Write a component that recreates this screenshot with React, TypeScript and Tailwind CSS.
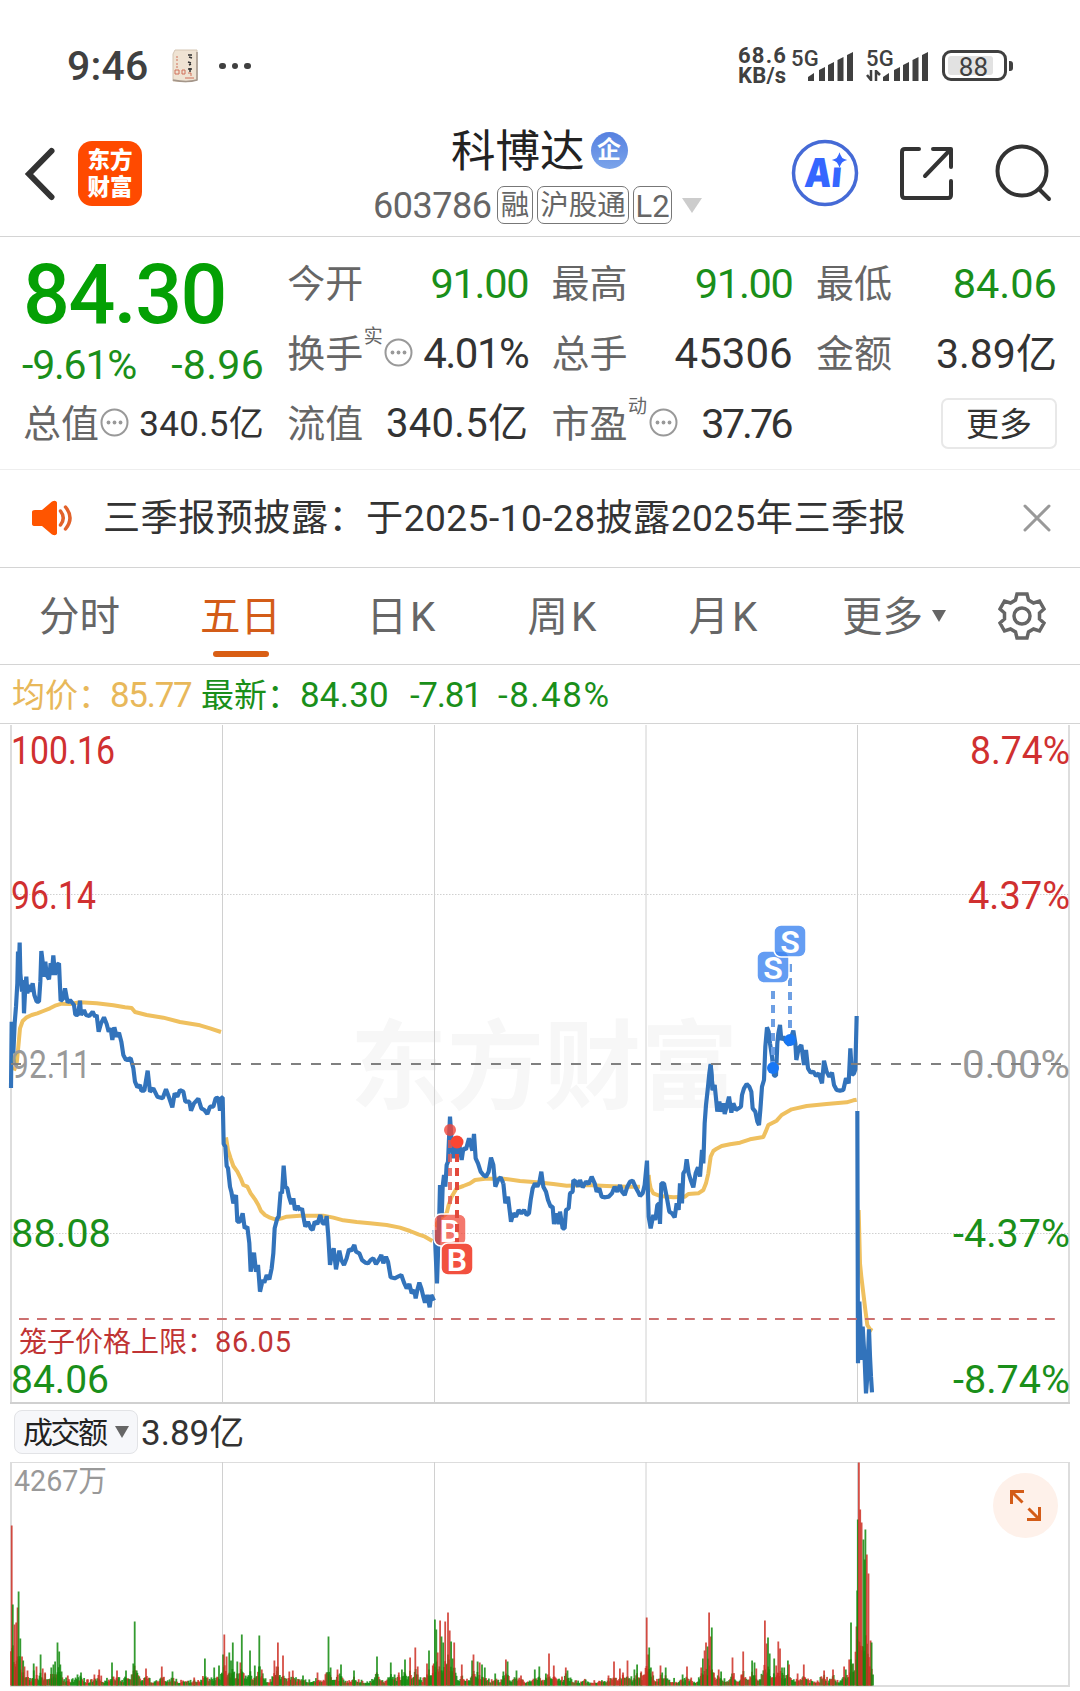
import { ReactNode } from 'react';

const DAY_LINES = [222.5, 434.5, 646, 857.5];

// Traced price runs, each in its own triple-density space anchored at x/y
interface Run {
  x: number;
  y: number;
  points: string;
}

const priceRuns: Run[] = [
  {
    x: 0,
    y: 920,
    points:
      '33,504 35,305 40,400 44,310 48,260 52,190 54,95 57,130 59,68 61,160 66,215 70,180 72,280 76,200 79,170 82,220 88,195 92,215 98,190 103,225 110,245 117,245 121,185 124,93 128,125 131,170 136,125 140,165 147,178 152,130 155,165 160,106 165,165 170,135 177,130 180,200 182,243 190,235 195,205 203,248 210,240 222,255 226,284 234,285 240,242 243,285 252,270 258,285 268,288 278,275 285,290 290,285 296,335 303,310 312,292 320,312 326,335 332,325 337,360 343,322 350,350 357,338 364,365 370,405 378,420 392,415 400,445 405,485 412,502 420,495 424,512 433,512 443,452 450,515 460,505 472,530 488,535 498,508 508,535 517,562 524,520 532,530 540,510 550,515 556,545 568,545 573,572 582,550 595,536 604,565 613,570 622,582 630,560 640,560 647,535 655,533 660,572 664,533 668,533 671,672 676,680 680,738 684,745 690,800 694,815 700,850 708,825 712,905 720,905 728,880 734,925 742,920 748,970 752,1055 762,998 768,1055 774,1035 780,1115 788,1080 793,1088 800,1065 808,1078 815,1045 820,1000 824,925 832,895 836,890 842,815 846,820 851,737 856,800 862,805 867,830 874,852 880,835 885,870 893,858 900,872',
  },
  {
    x: 210,
    y: 1080,
    points:
      '270,392 276,385 282,420 286,440 294,425 302,445 308,450 314,425 322,432 331,405 338,430 346,430 350,408 355,470 360,555 366,520 371,505 378,568 388,512 394,540 402,555 410,535 417,508 424,512 433,495 438,515 448,520 456,540 466,548 474,550 482,540 490,535 498,552 506,540 514,525 520,550 528,530 534,545 542,592 554,595 564,590 574,585 582,608 590,625 598,612 605,640 613,630 617,655 622,630 628,608 634,625 640,650 645,668 652,645 659,682 664,645 672,662',
  },
  {
    x: 210,
    y: 1080,
    points:
      '674,450 677,520 681,610 684,520 688,400 690,315 695,410 698,320 702,285 706,320 710,255 714,245 720,110 722,140 726,200 730,235 736,190 742,230 748,195 755,240 760,205 768,208 777,175 787,212 792,162 797,235 804,250 812,275 820,285 828,290 836,275 843,233 850,255 856,320 864,300 872,292 880,310',
  },
  {
    x: 420,
    y: 1050,
    points:
      '250,400 256,460 264,440 270,490 273,515 280,490 288,500 296,480 304,490 312,480 320,495 327,490 332,450 338,415 345,400 352,410 358,398 364,365 370,410 378,425 384,450 392,470 398,470 402,522 410,490 416,522 420,485 428,535 434,535 438,480 446,475 450,430 458,425 460,390 468,395 474,410 480,390 488,412 498,395 506,402 515,380 524,400 530,425 538,415 545,440 556,442 566,440 576,430 584,410 592,425 600,405 606,425 614,435 622,410 630,395 638,392 646,410 654,425 660,438 668,430 674,405 681,332 683,400 686,500 692,535 700,495 706,510 712,465 718,460 720,522 724,400 732,400 740,440 748,485 756,490 764,502 770,460 776,480 780,400 786,460 790,370 796,360 800,328 806,370 812,390 820,412 827,370 834,352 840,380 846,300 850,340 854,220 858,165 863,120 868,70 872,42 878,120 884,105',
  },
  {
    x: 680,
    y: 910,
    points:
      '92,465 98,540 104,525 112,605 118,575 124,605 130,580 134,612 140,590 147,560 154,608 160,580 168,600 176,595 183,590 186,555 192,535 200,522 208,530 214,545 218,595 226,605 232,635 237,645 241,600 246,530 252,510 256,410 261,352 266,365 270,400 276,440 282,497 288,497 292,400 295,370 300,345 304,390 310,380 318,395 328,405 334,380 340,362 346,400 349,450 356,415 364,405 372,465 378,420 384,475 392,488 400,485 408,498 416,490 426,520 432,452 440,485 448,500 456,488 462,525 470,540 480,542 490,540 498,505 506,520 511,415 516,495 522,490 526,478 530,318',
  },
  {
    x: 680,
    y: 910,
    points: '532,603 533,1000 534,1360 538,1175 541,1240 545,1350 548,1250 554,1350 558,1450 562,1400 567,1258 570,1340 573,1400 576,1447',
  },
];

const averageRuns: Run[] = [
  {
    x: 0,
    y: 920,
    points:
      '42,452 50,430 55,380 60,325 68,303 80,292 95,285 112,280 130,273 150,265 168,256 185,251 210,252 240,247 290,250 340,256 375,262 395,264 405,276 440,285 490,293 540,306 600,316 630,325 663,336',
  },
  {
    x: 0,
    y: 920,
    points:
      '678,652 684,690 692,715 700,738 712,755 722,775 730,795 742,800 752,820 765,838 775,855 783,873 795,885 810,893 828,899 845,895 860,890 900,887 970,887 1000,893 1030,901 1070,906 1110,910 1160,915 1200,923 1230,933 1255,943 1275,950 1297,963',
  },
  {
    x: 420,
    y: 1050,
    points:
      '45,530 60,505 80,490 86,465 95,440 110,415 130,408 150,400 165,390 195,386 250,386 300,393 350,397 400,402 440,407 500,405 560,408 620,410 660,410',
  },
  {
    x: 420,
    y: 1050,
    points: '686,375 688,395 692,415 700,430 720,438 760,442 795,440 805,432 835,430 850,420 858,400 865,370 872,320 880,303 890,296 905,288 930,283 960,278 990,268 1030,261 1037,245 1045,225 1070,212 1085,195 1115,178 1160,168 1220,162 1280,157 1300,151 1310,149',
  },
  { x: 680, y: 910, points: '536,900 540,1060 544,1100 550,1150 556,1200 562,1245 570,1258 577,1262' },
];

// Turnover peaks: x, height, r = up / g = down
const peaks: [number, number, 'r' | 'g'][] = [
  [11.7, 160, 'r'], [12.8, 81, 'g'], [14.5, 61, 'r'], [16.2, 63, 'r'], [17.6, 78, 'r'], [18.6, 94, 'g'], [20.3, 47, 'g'], [22, 29, 'r'],
  [23.2, 25, 'g'], [24.5, 19, 'r'], [27.5, 15, 'r'], [33.7, 22, 'g'], [36.5, 19, 'r'], [40.6, 31, 'g'], [42.7, 17, 'r'], [45.1, 13, 'r'],
  [51.3, 18, 'g'], [53.4, 21, 'g'], [55.1, 24, 'g'], [57.5, 43, 'g'], [59.2, 34, 'g'], [60.3, 21, 'g'], [61.6, 14, 'g'], [67.8, 10, 'r'],
  [77.5, 11, 'g'], [81, 13, 'g'], [94.4, 11, 'r'], [99.2, 16, 'r'], [112, 23, 'g'], [117, 15, 'r'], [126, 15, 'g'], [133.3, 22, 'g'],
  [134.7, 64, 'g'], [136.7, 15, 'g'], [146, 17, 'r'], [161.8, 19, 'r'], [172.5, 14, 'g'], [194.2, 8, 'r'], [204.9, 27, 'g'], [214.2, 18, 'g'],
  [219, 20, 'g'], [223.1, 31, 'g'], [224.3, 51, 'r'], [226.6, 29, 'r'], [229.3, 33, 'g'], [231, 25, 'g'], [232.8, 43, 'g'], [237.3, 24, 'g'],
  [240.4, 23, 'r'], [241.8, 51, 'g'], [250, 35, 'g'], [254.8, 20, 'g'], [259.3, 50, 'g'], [261.8, 16, 'r'], [274.4, 25, 'r'], [276.5, 19, 'r'],
  [277.9, 43, 'r'], [283, 30, 'r'], [289.3, 14, 'r'], [292.8, 15, 'r'], [303, 10, 'g'], [317.5, 13, 'r'], [328.5, 49, 'g'], [330.6, 18, 'g'],
  [337.5, 16, 'r'], [341, 21, 'g'], [354, 15, 'g'], [377, 29, 'g'], [390.8, 23, 'g'], [394.6, 11, 'g'], [398.8, 13, 'r'], [401.9, 16, 'g'],
  [405, 26, 'g'], [410.1, 28, 'r'], [415.3, 38, 'r'], [417.7, 19, 'r'], [427, 22, 'r'], [429, 35, 'g'], [432.8, 20, 'r'], [434.9, 66, 'g'],
  [436.3, 56, 'g'], [437.7, 33, 'r'], [440.1, 65, 'r'], [441.5, 49, 'g'], [443.2, 43, 'g'], [445.2, 64, 'r'], [448, 73, 'r'], [449.7, 55, 'r'],
  [451.1, 44, 'g'], [452.8, 27, 'g'], [454.2, 43, 'r'], [461.8, 21, 'r'], [472.1, 25, 'g'], [473.5, 31, 'r'], [477.6, 24, 'g'], [479.7, 23, 'r'],
  [482, 21, 'g'], [484.8, 18, 'g'], [495.2, 12, 'g'], [503.4, 14, 'g'], [505.9, 26, 'r'], [507.6, 24, 'g'], [516.5, 15, 'g'], [521, 10, 'r'],
  [534.8, 16, 'g'], [539.3, 19, 'g'], [545.9, 12, 'g'], [549, 32, 'r'], [553.8, 20, 'r'], [565.8, 18, 'r'], [567.5, 15, 'g'], [608.5, 10, 'r'],
  [614, 24, 'r'], [619.9, 17, 'r'], [623, 13, 'r'], [627.5, 25, 'r'], [634.4, 16, 'g'], [637.1, 21, 'g'], [641.2, 14, 'r'], [646.7, 68, 'r'],
  [648.1, 31, 'r'], [649.2, 38, 'g'], [650.9, 18, 'g'], [652.6, 14, 'r'], [660.5, 20, 'r'], [662.2, 13, 'g'], [665.7, 18, 'g'], [682.6, 11, 'g'],
  [687, 19, 'r'], [701.2, 18, 'r'], [702.9, 27, 'g'], [704.6, 35, 'r'], [706, 43, 'r'], [707.7, 39, 'g'], [709.1, 73, 'r'], [710.8, 49, 'r'],
  [711.8, 58, 'g'], [718.7, 16, 'r'], [721.1, 14, 'g'], [732.5, 28, 'r'], [741.4, 11, 'r'], [743.2, 34, 'r'], [752.1, 25, 'g'], [754.5, 23, 'g'],
  [756.3, 17, 'r'], [764.9, 65, 'r'], [766.6, 42, 'r'], [768, 48, 'g'], [769.7, 32, 'g'], [774.2, 27, 'g'], [776.2, 20, 'r'], [778.3, 44, 'r'],
  [780, 37, 'r'], [782, 18, 'g'], [784.2, 18, 'g'], [787.9, 25, 'g'], [789, 21, 'r'], [797.6, 12, 'r'], [803.8, 21, 'r'], [824.1, 15, 'r'],
  [833, 16, 'r'], [844.1, 19, 'r'], [845.8, 16, 'g'], [849.2, 26, 'r'], [851, 63, 'g'], [853, 22, 'g'], [856.5, 59, 'r'], [857.2, 95, 'g'],
  [857.8, 166, 'g'], [858.9, 223, 'r'], [860.2, 176, 'r'], [861.6, 163, 'r'], [863.4, 146, 'g'], [864.7, 126, 'g'], [865.4, 156, 'g'],
  [866.8, 131, 'r'], [868.5, 112, 'r'], [870.6, 45, 'r'], [871.6, 43, 'g'], [873, 11, 'g'],
];

// Quiet minutes between the peaks
const minorBars = (() => {
  const bars: [number, number, 'r' | 'g'][] = [];
  let seed = 7;
  const next = () => {
    seed = (seed * 16807) % 2147483647;
    return seed / 2147483647;
  };
  for (let x = 11; x < 872; x += 0.95) {
    let near = 0;
    for (const [px, h] of peaks) {
      near = Math.max(near, h * 0.42 * Math.exp(-Math.abs(px - x) / 2.6));
    }
    const h = 2 + 6 * next() * next() + Math.min(near, 50) * (0.5 + 0.5 * next());
    bars.push([x, h, next() > 0.48 ? 'g' : 'r']);
  }
  return bars;
})();

function InfoDots() {
  return (
    <svg className="-mt-[4px] ml-px h-[29px] w-[29px] shrink-0" viewBox="0 0 29 29">
      <circle cx="14.5" cy="14.5" r="13" fill="none" stroke="#999" strokeWidth="2" />
      <circle cx="8.5" cy="14.5" r="1.9" fill="#999" />
      <circle cx="14.5" cy="14.5" r="1.9" fill="#999" />
      <circle cx="20.5" cy="14.5" r="1.9" fill="#999" />
    </svg>
  );
}

interface StatProps {
  label: string;
  value: string;
  note?: string;
  info?: boolean;
  className?: string;
}

function Stat({ label, value, note, info, className }: StatProps) {
  return (
    <div className="flex h-[70px] items-center pt-[2px] whitespace-nowrap">
      <span className="-ml-[1px] text-[38px] text-[#666]">{label}</span>
      {note && <span className="mb-9 w-[20px] text-center text-[19px] text-[#666]">{note}</span>}
      {info && <InfoDots />}
      <span className={`ml-auto ${className ?? 'text-[42px] text-[#333]'}`}>{value}</span>
    </div>
  );
}

function Signal() {
  return (
    <svg className="h-[30px] w-[46px]" viewBox="0 0 46 30" fill="#404040">
      <path d="M0 29v-4l6-4v8zM11 29V18l6-3v14zM20 29V13l6-3v19zM29.500 29V8l6-3v24zM39 29V3l6-3v29z" />
    </svg>
  );
}

function StatusBar() {
  return (
    <div className="flex h-[121px] items-center pt-[11px] text-[#404040]">
      <span className="ml-[67px] w-[84px] pt-[1px] text-[41px] font-medium tracking-[0.2px]">9:46</span>
      <svg className="ml-[20px] h-[34px] w-[28px]" viewBox="0 0 28 34">
        <path d="M4 1h22v30q-11 3-24 1V5z" fill="#efe3d3" stroke="#d5c6b4" />
        <path d="M2 31q14 3 24 0V3" fill="none" stroke="#a4968a" strokeWidth="1.500" />
        <path d="M17 6h4m-3 2l3 1M17 13l3 1m-2 2l2-1M17 20h4m-2-1v4" stroke="#333" strokeWidth="1.500" fill="none" />
        <path d="M5 8h2M5 11h2M5 15h2M5 18h2M4 21h4v4H4zM11 21h3v4h-3zM17 24h3v3M14 29h9" stroke="#d0705a" fill="none" />
      </svg>
      <div className="ml-[20px] flex gap-[6px]">
        <i className="size-[6.5px] rounded-full bg-[#404040]" />
        <i className="size-[6.5px] rounded-full bg-[#404040]" />
        <i className="size-[6.5px] rounded-full bg-[#404040]" />
      </div>
      <div className="mr-[3px] ml-auto w-[50px] text-[22px] leading-[20px] font-bold">
        <div className="tracking-[1.200px]">68.6</div>
        <div className="tracking-[0.2px]">KB/s</div>
      </div>
      <div className="flex h-[36px]">
        <span className="-mr-[11px] w-[28px] text-[22px] font-medium tracking-[0.3px]">5G</span>
        <div className="pt-[4px]"><Signal /></div>
      </div>
      <div className="ml-[12px] flex h-[36px]">
        <div className="-mr-[11px] w-[28px]">
          <span className="block text-[22px] font-medium tracking-[0.3px]">5G</span>
          <svg className="h-[11px] w-[16px]" viewBox="0 0 16 11" stroke="#404040" strokeWidth="2.500" fill="none">
            <path d="M5 0v10L1 5M10 11V1l4 4" />
          </svg>
        </div>
        <div className="pt-[4px]"><Signal /></div>
      </div>
      <div className="-mt-px ml-[13px] flex h-[31px] w-[65px] items-center rounded-[9px] border-[3px] border-[#404040] p-[3px]">
        <div className="flex h-full w-[45px] items-center justify-end rounded-[3px] bg-[#e2e2e2]">
          <span className="mr-[5px] pt-[2px] text-[26px]">88</span>
        </div>
      </div>
      <i className="mr-[67px] ml-[2px] h-[10px] w-[4px] rounded-r-[3px] bg-[#404040]" />
    </div>
  );
}

function Tag({ children, className }: { children: ReactNode; className: string }) {
  return (
    <span className={`flex h-[38px] items-center justify-center rounded-[7px] border border-[#777] pt-[2px] text-[28.500px] whitespace-nowrap ${className}`}>{children}</span>
  );
}

function Header() {
  return (
    <header className="flex h-[116px] border-b border-[#d4d4d4]">
      <svg className="mt-[26px] ml-[24px] h-[54px] w-[34px]" viewBox="0 0 34 54">
        <path d="M27.500 4L5 27l22.500 23" fill="none" stroke="#333" strokeWidth="6" strokeLinecap="round" />
      </svg>
      <div className="mt-[20px] ml-[20px] flex h-[65px] w-[64px] flex-col items-center justify-center rounded-[14px] bg-[#ff4a00] text-[22.500px] leading-[27px] font-black text-white">
        <span>东方</span>
        <span>财富</span>
      </div>
      <div className="ml-[231px] flex w-[330px] flex-col">
        <div className="mt-[5px] ml-[78px] flex h-[48px] items-center">
          <span className="pt-[4px] text-[44.500px] text-[#222]">科博达</span>
          <span className="ml-[6px] flex size-[37px] items-center justify-center rounded-full bg-linear-to-b from-[#5680e0] to-[#7ba4ea] text-[24px] font-bold text-white">企</span>
        </div>
        <div className="mt-[12px] flex items-center text-[#666]">
          <span className="w-[124px] pt-[2px] text-[36px] tracking-[-0.5px]">603786</span>
          <Tag className="w-[36px]">融</Tag>
          <Tag className="ml-[4px] w-[92px]">沪股通</Tag>
          <Tag className="ml-[4px] w-[39px] text-[31px]">L2</Tag>
          <svg className="ml-[10px] h-[15px] w-[20px]" viewBox="0 0 20 15">
            <path d="M0 0h20L10 15z" fill="#ccc" />
          </svg>
        </div>
      </div>
      <svg className="mt-[18px] ml-[88px] h-[69px] w-[68px]" viewBox="0 0 68 69">
        <text x="17" y="48" textLength="37" lengthAdjust="spacingAndGlyphs" transform="skewX(-5)" className="font-['Inter'] text-[40px] font-black" fill="#3566ff">Ai</text>
        <path d="M41 12h15v16.500H41z" fill="#fff" />
        <path d="M48.500 16q1.500 4 4.500 5-3 1-4.500 5-1.500-4-4.500-5 3-1 4.500-5z" fill="#3566ff" stroke="#3566ff" strokeWidth="2" />
        <circle cx="34" cy="34" r="31.500" fill="none" stroke="#456ad6" strokeWidth="3.500" />
      </svg>
      <svg className="mt-[24px] ml-[39px] h-[58px] w-[58px]" viewBox="0 0 58 58" fill="none" stroke="#333" strokeWidth="4" strokeLinecap="round" strokeLinejoin="round">
        <path d="M21 4H7q-3 0-3 3v43q0 3 3 3h43q3 0 3-3V36M35 4h18v18M52 5L27 31" />
      </svg>
      <svg className="mt-[22px] ml-[38px] h-[60px] w-[60px]" viewBox="0 0 60 60" fill="none" stroke="#333" strokeWidth="4" strokeLinecap="round">
        <circle cx="28" cy="28" r="24.500" />
        <path d="M45 46l10 10" />
      </svg>
    </header>
  );
}

function Quote() {
  const down = 'text-[41.500px] text-[#1a8f1a]';
  return (
    <section className="grid h-[233px] grid-cols-[240px_240px_240px_240px] gap-x-[24.3px] border-b border-[#eee] pt-[11px] pl-[24px]">
      <div>
        <div className="-ml-px h-[89px] pt-[6px] text-[82.500px] font-medium tracking-[-1.500px] text-[#04a004]">84.30</div>
        <div className="flex h-[51px] items-center justify-between pt-[5px] text-[41px] text-[#1a8f1a]">
          <span className="-ml-[2px] tracking-[-1.200px]">-9.61%</span>
          <span className="tracking-[0.3px]">-8.96</span>
        </div>
        <Stat label="总值" value="340.5亿" info className="text-[35px] tracking-[0.3px] text-[#333]" />
      </div>
      <div>
        <Stat label="今开" value="91.00" className={`${down} tracking-[-1.300px]`} />
        <Stat label="换手" value="4.01%" note="实" info className="text-[42px] tracking-[-1.500px] text-[#333]" />
        <Stat label="流值" value="340.5亿" className="text-[40px] tracking-[0.3px] text-[#333]" />
      </div>
      <div>
        <Stat label="最高" value="91.00" className={`${down} tracking-[-1.300px]`} />
        <Stat label="总手" value="45306" />
        <Stat label="市盈" value="37.76" note="动" info className="mr-[2px] text-[41.500px] tracking-[-3px] text-[#333]" />
      </div>
      <div>
        <Stat label="最低" value="84.06" className={down} />
        <Stat label="金额" value="3.89亿" className="text-[41px] text-[#333]" />
        <div className="flex h-[70px] items-center justify-end">
          <button className="h-[51px] w-[116px] rounded-[7px] border-2 border-[#e8e8e8] pt-[2px] text-[33px] text-[#333]">更多</button>
        </div>
      </div>
    </section>
  );
}

function Notice() {
  return (
    <div className="flex h-[98px] items-center border-b border-[#d4d4d4] text-[#333]">
      <svg className="-mt-[2px] ml-[30px] h-[36px] w-[46px]" viewBox="0 0 46 36">
        <path d="M2 12q0-2 3-2h7L22 1.500q4-2 5 1v31q-1 3-5 1L12 26H5q-3 0-3-2z" fill="#ff5500" />
        <path d="M30.500 11q5.500 7 0 14M35.500 7q9 11 0 22" fill="none" stroke="#e2622a" strokeWidth="3.500" strokeLinecap="round" />
      </svg>
      <span className="ml-[27px] pt-[1px] text-[37.200px] tracking-[0.4px] whitespace-nowrap">三季报预披露：于2025-10-28披露2025年三季报</span>
      <svg className="-mt-px mr-[29px] ml-auto h-[28px] w-[28px]" viewBox="0 0 28 28">
        <path d="M2 2l24 24M26 2L2 26" stroke="#999" strokeWidth="3" strokeLinecap="round" />
      </svg>
    </div>
  );
}

const tabs = ['分时', '五日', '日K', '周K', '月K'];

function Tabs() {
  return (
    <nav className="flex h-[97px] items-center border-b border-[#d4d4d4] text-[40.500px] text-[#666]">
      {tabs.map((tab) => (
        <div key={tab} className={`relative flex h-full w-[161px] items-center justify-center pt-[3px] whitespace-nowrap ${tab === '五日' ? 'text-[#d35c18]' : ''}`}>
          <span className={tab.endsWith('K') ? 'tracking-[3px]' : '-ml-[2px]'}>{tab}</span>
          {tab === '五日' && <i className="absolute bottom-[7px] left-[52px] h-[6px] w-[56px] rounded-full bg-[#d95e14]" />}
        </div>
      ))}
      <span className="ml-[37px] pt-[3px]">更多</span>
      <svg className="ml-[9px] h-[12px] w-[14px]" viewBox="0 0 14 12">
        <path d="M0 0h14L7 12z" fill="#666" />
      </svg>
      <svg className="mr-[34px] ml-auto h-[50px] w-[48px]" viewBox="0 0 48 50" fill="none" stroke="#666" strokeWidth="3.500">
        <path d="M19 3h10l1.500 6 5 3 6-2 4.500 8-4.500 4v6l4.500 4-4.500 8-6-2-5 3-1.500 6H19l-1.500-6-5-3-6 2L2 32l4.500-4v-6L2 18l4.500-8 6 2 5-3z" />
        <circle cx="24" cy="25" r="8" />
      </svg>
    </nav>
  );
}

function Legend() {
  return (
    <div className="flex h-[59px] items-center border-b border-[#d4d4d4] pt-[3px] pl-[12px] text-[33px] whitespace-nowrap text-[#1a8f1a]">
      <span className="w-[98px] text-[#e8b85a]">均价：</span>
      <span className="w-[91px] text-[35px] tracking-[-1.300px] text-[#e8b85a]">85.77</span>
      <span className="w-[99px]">最新：</span>
      <span className="w-[110px] text-[35px] tracking-[0.2px]">84.30</span>
      <span className="w-[88px] text-[35px] tracking-[-1.300px]">-7.81</span>
      <span className="text-[35px] tracking-[1.500px]">-8.48%</span>
    </div>
  );
}

interface AxisProps {
  y: number;
  price: string;
  pct: string;
  color: string;
  left: number;
  right: number;
}

// left and right hold the drawn widths of the two labels
const axis: AxisProps[] = [
  { y: 764, price: '100.16', pct: '8.74%', color: '#d03030', left: 104, right: 100 },
  { y: 908.5, price: '96.14', pct: '4.37%', color: '#d03030', left: 85, right: 102 },
  { y: 1078, price: '92.11', pct: '0.00%', color: '#999', left: 80, right: 108 },
  { y: 1247, price: '88.08', pct: '-4.37%', color: '#1a8f1a', left: 100, right: 117 },
  { y: 1393, price: '84.06', pct: '-8.74%', color: '#1a8f1a', left: 98, right: 117 },
];

function Marker({ x, y, letter, fill, opacity }: { x: number; y: number; letter: string; fill: string; opacity: number }) {
  return (
    <g>
      <rect x={x - 16} y={y - 16} width="32" height="32" rx="7" fill={fill} fillOpacity={opacity} stroke="#fff" strokeWidth="1.500" />
      <text x={x} y={y + 11.5} textAnchor="middle" fill="#fff" className="font-['Roboto'] text-[32px] font-semibold">{letter}</text>
    </g>
  );
}

function PriceChart() {
  return (
    <svg className="block h-[681px] w-full" viewBox="0 724 1080 681">
      <text x="350" y="1101" textLength="388" fill="#f7f7f7" className="text-[97px] font-bold">东方财富</text>
      <g stroke="#d0d0d0">
        <path d="M11 725v678M1069 725v678" strokeWidth="2" stroke="#ddd" />
        {DAY_LINES.map((x) => <path key={x} d={`M${x} 725v678`} />)}
        <path d="M11 894.500h1058M11 1233.500h1058" strokeDasharray="1.500 1.500" />
        <path d="M10 1403h1060" strokeWidth="2" />
      </g>
      {averageRuns.map((run, i) => (
        <g key={i} transform={`translate(${run.x} ${run.y}) scale(0.33333)`}>
          <polyline points={run.points} fill="none" stroke="#efc05f" strokeWidth="12" strokeLinejoin="round" />
        </g>
      ))}
      {priceRuns.map((run, i) => (
        <g key={i} transform={`translate(${run.x} ${run.y}) scale(0.33333)`}>
          <polyline points={run.points} fill="none" stroke="#3273bb" strokeWidth="12.500" strokeLinejoin="bevel" />
        </g>
      ))}
      {axis.map((a) => (
        <g key={a.price} fill={a.color} className="text-[38.500px]">
          <text x="11" y={a.y} textLength={a.left} lengthAdjust="spacingAndGlyphs">{a.price}</text>
          <text x={1070 - a.right} y={a.y} textLength={a.right} lengthAdjust="spacingAndGlyphs">{a.pct}</text>
        </g>
      ))}
      <path d="M11 1064h1058" stroke="#808080" strokeWidth="2" strokeDasharray="10 10" />
      <path d="M19 1319h1037" stroke="#cc7070" strokeWidth="2" strokeDasharray="9.800 8.200" />
      <text x="19" y="1352" fill="#c03434" className="text-[28px]">笼子价格上限：</text>
      <text x="215" y="1352" textLength="76" fill="#c03434" className="text-[29px]">86.05</text>

      <g strokeWidth="4" strokeDasharray="8 6" fill="none">
        <path d="M450 1140v70" stroke="#e2584f" strokeOpacity="0.8" />
        <path d="M773 991v72M790 964v66" stroke="#6d9fe3" />
      </g>
      <circle cx="450" cy="1130" r="6" fill="#f0463a" fillOpacity="0.8" />
      <circle cx="457" cy="1142" r="6.500" fill="#fa4632" />
      <circle cx="773" cy="1068" r="6" fill="#1777f5" />
      <circle cx="790" cy="1040" r="6" fill="#1777f5" />
      <Marker x={450} y={1230} letter="B" fill="#f04434" opacity={0.72} />
      <path d="M457 1154v90" stroke="#e2483b" strokeWidth="4" strokeDasharray="8 6" />
      <Marker x={457} y={1259} letter="B" fill="#f2503f" opacity={1} />
      <Marker x={773} y={967} letter="S" fill="#3d85f0" opacity={0.8} />
      <Marker x={790} y={941} letter="S" fill="#3d85f0" opacity={0.8} />
    </svg>
  );
}

function Turnover() {
  return (
    <>
      <div className="flex h-[57px] items-center pb-[3px] pl-[14px]">
        <button className="flex h-[44px] w-[124px] items-center justify-between rounded-[8px] border border-[#e2e3e6] bg-[#f6f7fa] pr-[8px] pl-[8px] text-[30px] tracking-[-2.500px] whitespace-nowrap text-[#222]">
          <span className="pt-[2px]">成交额</span>
          <svg className="h-[12px] w-[14px]" viewBox="0 0 14 12">
            <path d="M0 0h14L7 12z" fill="#666" />
          </svg>
        </button>
        <span className="ml-[3px] pt-[3px] text-[35px] text-[#333]">3.89亿</span>
      </div>
      <svg className="block h-[229px] w-full" viewBox="0 1462 1080 229">
        <g stroke="#d0d0d0" fill="none">
          <path d="M11 1462v224M1069 1462v224M10 1686h1060" strokeWidth="2" stroke="#ddd" />
          <path d="M10 1462.500h1060" stroke="#ddd" />
          {DAY_LINES.map((x) => <path key={x} d={`M${x} 1462v224`} />)}
        </g>
        <text x="14" y="1491" fill="#999" className="text-[30px]" textLength="93" lengthAdjust="spacingAndGlyphs">4267万</text>
        {[...minorBars, ...peaks].map(([x, h, tone], i) => (
          <rect key={i} x={x - 0.9} y={1685.5 - h} width="1.8" height={h} fill={tone === 'r' ? '#cc2f24' : '#118a0c'} fillOpacity="0.85" />
        ))}
        <circle cx="1025.500" cy="1505.500" r="32.500" fill="#fef1ea" />
        <path d="M1011.500 1504v-12.500h12.500M1012 1492l10.500 10.500M1027 1519.500h12.500V1507M1039 1519l-10.500-10.500" fill="none" stroke="#d35c18" strokeWidth="3" />
      </svg>
    </>
  );
}

export default function App() {
  return (
    <main className="h-[1691px] w-[1080px] overflow-hidden bg-white font-['Roboto','Noto_Sans_CJK_SC',sans-serif] leading-none">
      <StatusBar />
      <Header />
      <Quote />
      <Notice />
      <Tabs />
      <Legend />
      <PriceChart />
      <Turnover />
    </main>
  );
}
